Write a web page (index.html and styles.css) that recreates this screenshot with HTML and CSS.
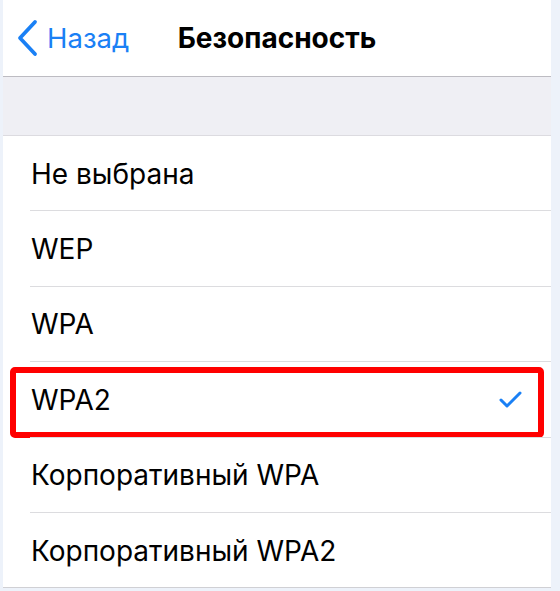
FILE: index.html
```html
<!DOCTYPE html>
<html lang="ru">
<head>
<meta charset="utf-8">
<link rel="stylesheet" href="styles.css">
</head>
<body>
<div class="screen">
  <header class="nav">
    <div class="back">
      <svg class="chev" width="24" height="38" viewBox="0 0 24 38"><path d="M19 3 L4 19 L19 35" fill="none" stroke="#1a80f5" stroke-width="3.8" stroke-linecap="round" stroke-linejoin="round"/></svg>
      <span class="back-label">Назад</span>
    </div>
    <div class="title">Безопасность</div>
  </header>
  <div class="gap"></div>
  <ul class="list">
    <li class="row"><span class="label">Не выбрана</span></li>
    <li class="row"><span class="label">WEP</span></li>
    <li class="row"><span class="label">WPA</span></li>
    <li class="row selected"><span class="label">WPA2</span>
      <svg class="check" width="24" height="18" viewBox="0 0 24 18"><path d="M2 9 L8 15 L21 2" fill="none" stroke="#1a80f5" stroke-width="3" stroke-linecap="round" stroke-linejoin="round"/></svg>
      <div class="highlight"></div>
    </li>
    <li class="row"><span class="label">Корпоративный WPA</span></li>
    <li class="row last"><span class="label">Корпоративный WPA2</span></li>
  </ul>
</div>
</body>
</html>
```
FILE: styles.css
```css
html, body {
  margin: 0;
  padding: 0;
}
body {
  background: #edf2fa;
  font-family: Inter, "Noto Sans", sans-serif;
  color: #000;
}
.screen {
  margin: 0 9px 0 3px;
  background: #fff;
  height: 588px;
}
.nav {
  position: relative;
  height: 76px;
  border-bottom: 1px solid #bdbcc2;
  display: flex;
  align-items: center;
  justify-content: center;
}
.back {
  position: absolute;
  left: 13px;
  top: 0;
  height: 76px;
  display: flex;
  align-items: center;
  gap: 7px;
  color: #1a80f5;
}
.chev {
  display: block;
}
.back-label {
  font-size: 27.5px;
}
.title {
  font-size: 28px;
  font-weight: 700;
}
.gap {
  height: 58px;
  background: #efeff4;
  border-bottom: 1px solid #dcdbe0;
}
.list {
  list-style: none;
  margin: 0;
  padding: 0;
}
.row {
  position: relative;
  height: 75.4px;
  display: flex;
  align-items: center;
  justify-content: space-between;
  padding: 0 28px 0 28px;
  box-sizing: border-box;
}
.row::after {
  content: "";
  position: absolute;
  left: 27px;
  right: 0;
  bottom: 0;
  height: 1px;
  background: #dcdcdf;
}
.row.last::after {
  left: 0;
  background: #d0d0d4;
}
.label {
  font-size: 28px;
}
.check {
  display: block;
}
.highlight {
  position: absolute;
  left: 7px;
  right: 7px;
  top: 5px;
  bottom: 0;
  border: 6px solid #ff0000;
  border-radius: 5px;
}
```
